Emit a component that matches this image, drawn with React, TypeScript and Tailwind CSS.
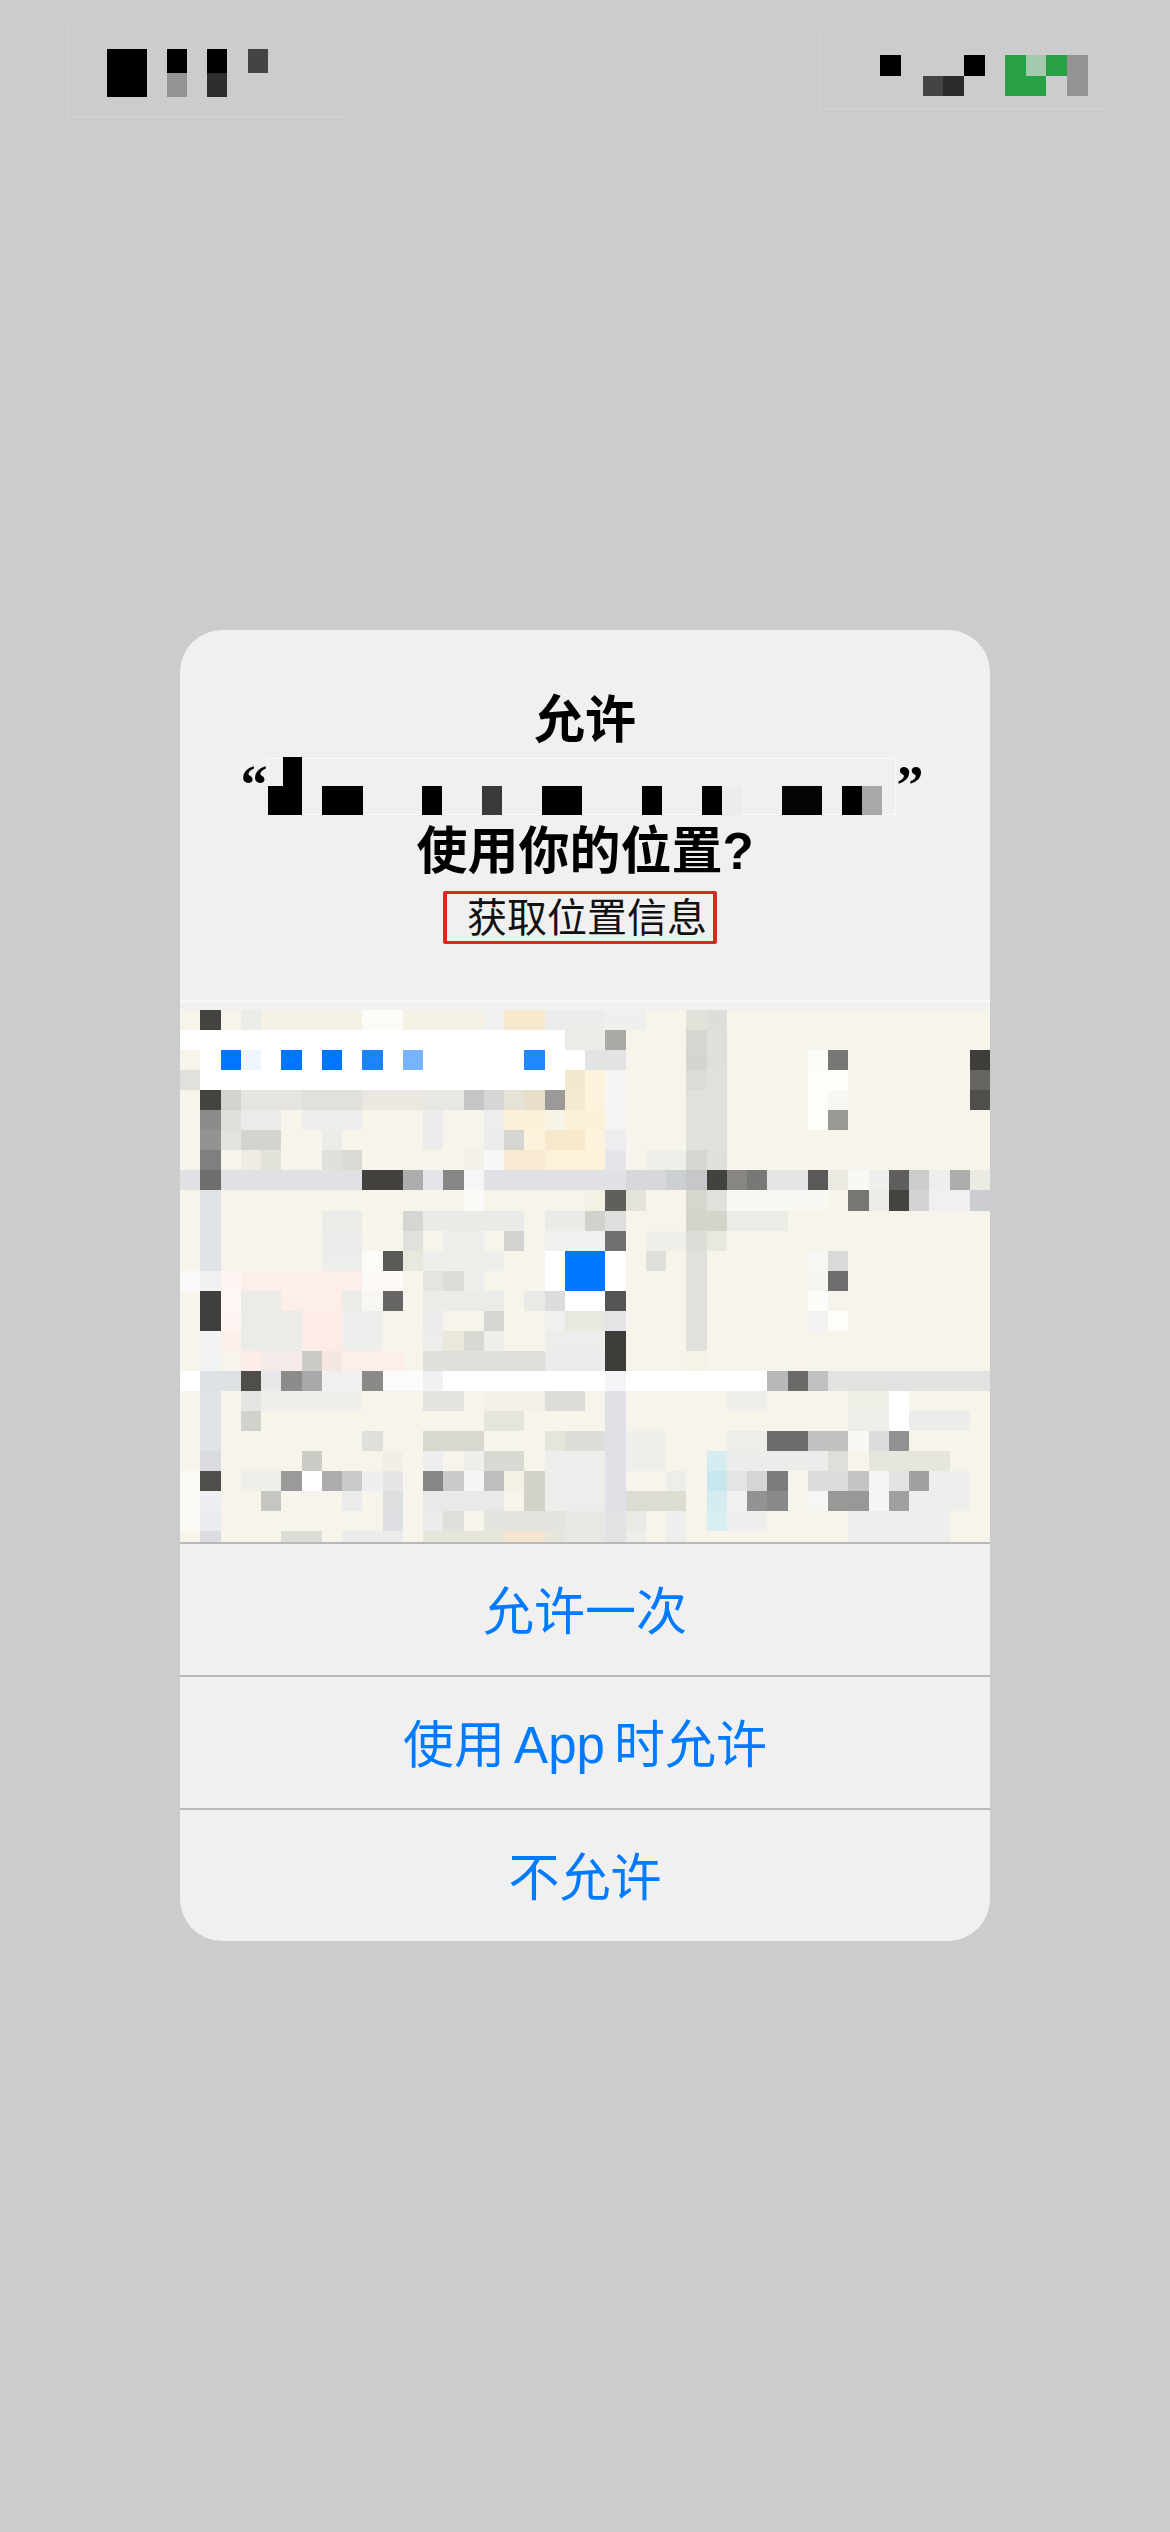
type Cell = [number, number, string]

const ROW_H = 20.05
const COL_W = 20.25

// mosaic of the map preview: row -> [column, span, colour], anything missing is the cream base
const mapRows: Cell[][] = [
  [[1,1,"#45433f"],[3,1,"#ebebe8"],[4,5,"#f5f1e4"],[9,2,"#fcfbf6"],[11,4,"#f5f1e4"],[15,1,"#f0f0ee"],[16,2,"#f7e8cc"],[18,3,"#ececea"],[21,2,"#eff0ee"],[25,1,"#e3e2da"],[26,1,"#dcdeda"]],
  [[0,19,"#ffffff"],[19,2,"#ebebe8"],[21,1,"#a9a9a6"],[25,1,"#d6d7d0"],[26,1,"#dfe0dc"]],
  [[1,19,"#ffffff"],[2,1,"#0078fe"],[3,1,"#f0f6fd"],[5,1,"#0078fe"],[7,1,"#0078fe"],[9,1,"#1a85fb"],[11,1,"#78b4fb"],[17,1,"#2089fb"],[20,2,"#e2e3e5"],[25,1,"#d4d5ce"],[26,1,"#dfe0dc"],[31,1,"#fcfcf8"],[32,1,"#777775"],[39,1,"#3e3d39"]],
  [[0,1,"#e0e1dd"],[1,18,"#ffffff"],[19,1,"#f3e8cd"],[20,1,"#fdf3dc"],[21,1,"#f5f5f4"],[25,1,"#dcdcd7"],[26,1,"#e0e1dc"],[31,2,"#fdfdfa"],[39,1,"#656461"]],
  [[1,1,"#454340"],[2,1,"#d2d2ce"],[3,3,"#e5e4df"],[6,3,"#e0e0dc"],[9,3,"#eae8e0"],[12,2,"#e7e7e3"],[14,1,"#c5c5c3"],[15,1,"#d6d6d6"],[16,1,"#e6e2d6"],[17,1,"#e8dfcb"],[18,1,"#9b9a98"],[19,1,"#f5e9cf"],[20,1,"#fdf3dc"],[21,1,"#f5f5f5"],[25,2,"#e0e1dc"],[31,1,"#fdfdfa"],[32,1,"#f8f7f2"],[39,1,"#4f4e4b"]],
  [[1,1,"#8b8b89"],[2,1,"#dfe0dc"],[3,2,"#ebebe9"],[6,3,"#ededeb"],[12,1,"#ececea"],[15,1,"#ededee"],[16,2,"#fdf0d9"],[18,1,"#f7f4e6"],[19,2,"#fdf0d9"],[21,1,"#f5f5f5"],[25,2,"#e0e1dc"],[31,1,"#fdfdfa"],[32,1,"#999894"]],
  [[1,1,"#939391"],[2,1,"#e2e2de"],[3,2,"#d3d3d0"],[7,1,"#ebebe8"],[12,1,"#ececea"],[15,1,"#ececec"],[16,1,"#d4d6cf"],[17,1,"#fdf3dc"],[18,2,"#f6e8cc"],[20,1,"#fdf3dc"],[21,1,"#ededf0"],[25,2,"#e0e1dc"]],
  [[1,1,"#7f7f7d"],[3,1,"#eeece4"],[4,1,"#e2e2da"],[7,1,"#e0e0da"],[8,1,"#d9dad5"],[14,1,"#f3f1ea"],[15,1,"#f8f8f6"],[16,2,"#f9ebd2"],[18,3,"#fdf1d9"],[21,1,"#e4e5e8"],[23,2,"#eeeeea"],[25,1,"#d6d7d0"],[26,1,"#dfe0da"]],
  [[0,1,"#e0e1e5"],[1,1,"#6f6f6f"],[2,7,"#e0e1e5"],[9,2,"#44423e"],[11,1,"#adadad"],[12,1,"#e4e5e8"],[13,1,"#878785"],[14,1,"#f6f6f6"],[15,7,"#e0e1e5"],[22,2,"#d6d8dc"],[24,1,"#ccd0d2"],[25,1,"#c5c7c9"],[26,1,"#44423f"],[27,1,"#878683"],[28,1,"#787877"],[29,2,"#e5e6e6"],[31,1,"#5a5957"],[32,1,"#eaeae3"],[33,1,"#f8f8f4"],[34,1,"#eeeeec"],[35,1,"#5f5e5c"],[36,1,"#ccccca"],[37,1,"#eeeeec"],[38,1,"#acacaa"],[39,1,"#ebebe3"]],
  [[1,1,"#e0e3e8"],[14,1,"#fbfaf6"],[20,1,"#f3f1e6"],[21,1,"#605f5c"],[22,1,"#e3e3da"],[25,1,"#d5d6cd"],[26,1,"#e1e2dc"],[27,5,"#f9f9f4"],[33,1,"#777673"],[34,1,"#ebebe8"],[35,1,"#454340"],[36,1,"#d4d4d4"],[37,2,"#f0f0f0"],[39,1,"#cccdd0"]],
  [[1,1,"#e0e3e8"],[7,2,"#ebebe8"],[11,1,"#d5d6d1"],[12,5,"#eaeae6"],[18,2,"#eaeae6"],[20,1,"#d2d2cd"],[21,1,"#dededc"],[25,2,"#d3d4cb"],[27,3,"#ecece7"]],
  [[1,1,"#e0e3e8"],[7,2,"#ececea"],[11,1,"#e0e1dc"],[13,2,"#eeeeea"],[16,1,"#d2d3ce"],[18,3,"#f0f0ee"],[21,1,"#707070"],[23,2,"#f0efe9"],[25,1,"#dcddd6"],[26,1,"#e8e8e0"]],
  [[1,1,"#e0e3e8"],[7,2,"#ededeb"],[9,1,"#fcfbf8"],[10,1,"#5a5a57"],[11,1,"#e8e8de"],[12,4,"#eeeeeb"],[18,1,"#ffffff"],[19,2,"#0078fe"],[21,1,"#ffffff"],[23,1,"#dfe0db"],[25,1,"#e0e1dc"],[31,1,"#f7f7f4"],[32,1,"#d9d9d7"]],
  [[0,1,"#fafafa"],[1,1,"#eff1f2"],[2,1,"#fff6f3"],[3,6,"#fdeeec"],[9,2,"#fdf9f6"],[12,1,"#e5e5df"],[13,1,"#dcddd7"],[14,1,"#eeeeeb"],[18,1,"#ffffff"],[19,2,"#0078fe"],[21,1,"#ffffff"],[25,1,"#e0e1dc"],[31,1,"#f5f5f1"],[32,1,"#6e6e6c"]],
  [[1,1,"#3f3f3d"],[2,1,"#fff8f5"],[3,2,"#ebebe8"],[5,3,"#fdeeea"],[8,1,"#ebebe8"],[9,1,"#f8f7f4"],[10,1,"#676664"],[12,4,"#ebebe8"],[17,1,"#e9e9e6"],[18,1,"#dcdcdc"],[19,2,"#ffffff"],[21,1,"#555553"],[25,1,"#e0e1dc"],[31,1,"#fcfcf8"]],
  [[1,1,"#3f3f3d"],[2,1,"#fff5f2"],[3,3,"#ebebe8"],[6,2,"#fdebe8"],[8,2,"#eeeeec"],[12,1,"#ececea"],[15,1,"#d6d7d3"],[18,1,"#f0f0ee"],[19,2,"#e8e8e0"],[21,1,"#e4e4e7"],[25,1,"#e0e1dc"],[31,1,"#f2f2f0"],[32,1,"#fdfdf9"]],
  [[1,1,"#f1f3f4"],[2,1,"#fdf0ea"],[3,3,"#ebebe8"],[6,2,"#fdebe8"],[8,2,"#eeeeec"],[12,1,"#ededeb"],[13,1,"#e9e8da"],[14,1,"#d9d9d4"],[15,1,"#eeeeea"],[18,3,"#ededeb"],[21,1,"#3f3d39"],[25,1,"#e0e1dc"]],
  [[1,1,"#f1f3f4"],[3,1,"#fdecea"],[4,2,"#f5ecea"],[6,1,"#cdcbc6"],[7,1,"#f5e6e2"],[8,3,"#fdeeea"],[12,6,"#dfe0d9"],[18,3,"#ececec"],[21,1,"#3f3d39"],[25,1,"#f5f3e5"]],
  [[0,1,"#ffffff"],[1,2,"#dfe2e4"],[3,1,"#4f4e4b"],[4,1,"#e8e8e8"],[5,1,"#8c8c8a"],[6,1,"#a8a8a8"],[7,2,"#f0f0f0"],[9,1,"#8a8a88"],[10,2,"#fbfbfb"],[12,1,"#f0f1f2"],[13,16,"#ffffff"],[21,1,"#f5f5f7"],[29,1,"#b8b8b8"],[30,1,"#6b6a68"],[31,1,"#c0c0c0"],[32,8,"#e2e2e0"]],
  [[1,1,"#dfe2e6"],[3,1,"#e5e5e3"],[4,5,"#eeeeea"],[12,2,"#e3e3e0"],[15,3,"#f2f0e8"],[18,2,"#dddeda"],[21,1,"#e0e1e6"],[27,2,"#eeeeea"],[33,2,"#eeede6"],[35,1,"#ffffff"]],
  [[1,1,"#dfe2e6"],[3,1,"#d2d2cc"],[15,2,"#e6e5dc"],[21,1,"#e0e1e6"],[33,2,"#eeede8"],[35,1,"#ffffff"],[36,3,"#ececea"]],
  [[1,1,"#dfe2e6"],[9,1,"#dfe0da"],[12,3,"#d8d8d0"],[18,1,"#e5e5dc"],[19,2,"#dcded8"],[21,1,"#e0e1e6"],[22,2,"#eeeeea"],[27,2,"#ededea"],[29,2,"#6c6c6a"],[31,2,"#c2c2c0"],[33,1,"#f8f8f4"],[34,1,"#dcdcdc"],[35,1,"#929291"]],
  [[1,1,"#d9dbe0"],[6,1,"#ccccc6"],[10,1,"#f2f0e6"],[12,1,"#eeeeee"],[14,1,"#eeeeea"],[15,2,"#d8d9d2"],[18,3,"#ededec"],[21,1,"#e0e1e6"],[22,2,"#eeeeea"],[26,1,"#d5ecf0"],[27,5,"#ececea"],[32,1,"#dddfd8"],[34,4,"#e6e6dc"]],
  [[0,1,"#fbfbf6"],[1,1,"#4f4e4b"],[3,2,"#efeee8"],[5,1,"#9a9a98"],[6,1,"#ffffff"],[7,1,"#acacac"],[8,1,"#c9c9c9"],[9,1,"#efefed"],[10,1,"#e6e6e6"],[12,1,"#868686"],[13,1,"#cacaca"],[14,1,"#f5f5f5"],[15,1,"#bebebe"],[16,1,"#f3f1e6"],[17,1,"#d2d2ca"],[18,3,"#ededec"],[21,1,"#e0e1e6"],[24,1,"#ededea"],[26,1,"#c8e6ee"],[27,1,"#e4e4e4"],[28,1,"#d5d5d5"],[29,1,"#7c7c7c"],[31,2,"#dcdcdc"],[33,1,"#c4c4c4"],[34,1,"#f5f5f5"],[35,1,"#e2e2e2"],[36,1,"#a0a09e"],[37,2,"#eeeeec"]],
  [[0,1,"#fbfbf6"],[1,1,"#eeeff3"],[4,1,"#c6c6c0"],[8,1,"#ebebeb"],[10,1,"#dedfe0"],[12,4,"#e9e9e9"],[17,1,"#d2d2ca"],[18,3,"#ededec"],[21,1,"#e0e1e6"],[22,3,"#dcdcd3"],[26,1,"#d4ecf0"],[27,1,"#f0f0f0"],[28,1,"#939393"],[29,1,"#8a8a8a"],[31,1,"#f6f6f4"],[32,2,"#989896"],[34,1,"#f5f5f5"],[35,1,"#a0a09e"],[36,3,"#eeeeec"]],
  [[0,1,"#fbfbf6"],[1,1,"#ebecf0"],[10,1,"#dedfe2"],[12,1,"#ececec"],[13,1,"#dfdfdc"],[15,4,"#e4e4de"],[19,2,"#e8e8e4"],[21,1,"#e3e3e6"],[22,1,"#eaeae4"],[24,1,"#eeeeec"],[26,1,"#d8eef0"],[27,2,"#eeeeec"],[33,3,"#eeeeec"],[36,2,"#eeeeec"]],
  [[1,1,"#dbdde2"],[5,2,"#dcdcd6"],[8,3,"#ececea"],[12,4,"#e6e6dc"],[16,2,"#f5e4cf"],[18,1,"#e6e6dc"],[19,2,"#e8e8e4"],[21,1,"#e3e3e6"],[22,1,"#eeeeea"],[24,1,"#eeeeec"],[33,3,"#eeeeec"],[36,2,"#eeeeec"]],
]

function MapPreview() {
  return (
    <svg width="810" height="542" viewBox="0 0 810 542" shapeRendering="crispEdges" className="block">
      <rect width="810" height="542" fill="#f7f4ec" />
      <rect width="810" height="10" fill="#f1f1ef" />
      <rect width="810" height="2" fill="#f8f8f8" />
      {mapRows.map((row, r) =>
        row.map(([col, span, color]) => (
          <rect key={`${r}-${col}`} x={col * COL_W} y={10 + r * ROW_H} width={span * COL_W} height={ROW_H} fill={color} />
        ))
      )}
    </svg>
  )
}

function CarrierBlock() {
  return (
    <div className="w-[280px] h-[90px] mt-[28px] border-l-2 border-b-2 border-[#d1d1d1]">
      <svg width="280" height="90" viewBox="0 0 280 90" shapeRendering="crispEdges" className="block">
        <rect x="38" y="21" width="40" height="48" fill="#000" />
        <rect x="98" y="21" width="20" height="24" fill="#000" />
        <rect x="98" y="45" width="20" height="24" fill="#949494" />
        <rect x="138" y="21" width="20" height="24" fill="#000" />
        <rect x="138" y="45" width="20" height="24" fill="#2e2e2e" />
        <rect x="179" y="21" width="20" height="24" fill="#444" />
      </svg>
    </div>
  )
}

function StatusBlock() {
  return (
    <div className="w-[289px] h-[75px] mt-[35px] border-l-2 border-b-2 border-[#d1d1d1]">
      <svg width="289" height="75" viewBox="0 0 289 75" shapeRendering="crispEdges" className="block">
        <rect x="59" y="20" width="21" height="21" fill="#000" />
        <rect x="102" y="41" width="20" height="20" fill="#444" />
        <rect x="122" y="41" width="21" height="20" fill="#2b2b2b" />
        <rect x="143" y="20" width="21" height="21" fill="#000" />
        <rect x="184" y="20" width="41" height="41" fill="#27a046" />
        <rect x="205" y="20" width="20" height="21" fill="#a5c9ac" />
        <rect x="225" y="20" width="21" height="21" fill="#27a046" />
        <rect x="246" y="20" width="21" height="41" fill="#949494" />
      </svg>
    </div>
  )
}

function RedactedName() {
  return (
    <svg width="629" height="59" viewBox="0 0 629 59" shapeRendering="crispEdges" className="block">
      <rect x="0.5" y="1.5" width="627" height="56" fill="none" stroke="#fafafa" />
      <rect x="0" y="29" width="34" height="29" fill="#000" />
      <rect x="15" y="0" width="19" height="29" fill="#000" />
      <rect x="54" y="29" width="41" height="29" fill="#000" />
      <rect x="154" y="29" width="20" height="29" fill="#000" />
      <rect x="214" y="29" width="20" height="29" fill="#3a3a3a" />
      <rect x="274" y="29" width="40" height="29" fill="#000" />
      <rect x="374" y="29" width="20" height="29" fill="#000" />
      <rect x="434" y="29" width="20" height="29" fill="#000" />
      <rect x="454" y="29" width="20" height="29" fill="#ececec" />
      <rect x="514" y="29" width="40" height="29" fill="#050505" />
      <rect x="574" y="29" width="20" height="29" fill="#000" />
      <rect x="594" y="29" width="20" height="29" fill="#a8a8a8" />
    </svg>
  )
}

function ActionButton({ label }: { label: string }) {
  return (
    <div className="h-[133px] pt-[5px] flex items-center justify-center border-t-2 border-[#b8b8b8] text-[51px] leading-none [word-spacing:-5px] text-[#007aff]">
      {label}
    </div>
  )
}

export default function App() {
  return (
    <div className="h-[2532px] bg-[#cccccc] font-['Liberation_Sans','Noto_Sans_CJK_SC',sans-serif] overflow-hidden">
      {/* status bar */}
      <div className="flex justify-between pl-[67px] pr-[62px]">
        <CarrierBlock />
        <StatusBlock />
      </div>

      {/* location permission alert */}
      <div className="w-[810px] mt-[512px] mx-auto rounded-[42px] bg-[#f0f0f0] overflow-hidden">
        <div className="pt-[59px] flex flex-col items-center">
          <div className="text-[51px] leading-[64px] font-semibold text-black">允许</div>
          <div className="h-[66px] flex items-center justify-center pr-[6px]">
            <span className="font-['Liberation_Serif',serif] text-[54px] font-bold leading-none text-black mb-[2px]">“</span>
            <RedactedName />
            <span className="font-['Liberation_Serif',serif] text-[54px] font-bold leading-none text-black mb-[2px]">”</span>
          </div>
          <div className="text-[51px] leading-[66px] font-semibold text-black">使用你的位置?</div>
          <div className="mt-[6px] mr-[10px] h-[53px] w-[274px] pl-[20px] border-x-4 border-y-[3px] border-[#d9281c] rounded-[2px] flex items-center text-[40px] leading-none text-[#111111]">
            获取位置信息
          </div>
        </div>
        <div className="mt-[56px]">
          <MapPreview />
        </div>
        <ActionButton label="允许一次" />
        <ActionButton label="使用 App 时允许" />
        <ActionButton label="不允许" />
      </div>
    </div>
  )
}
